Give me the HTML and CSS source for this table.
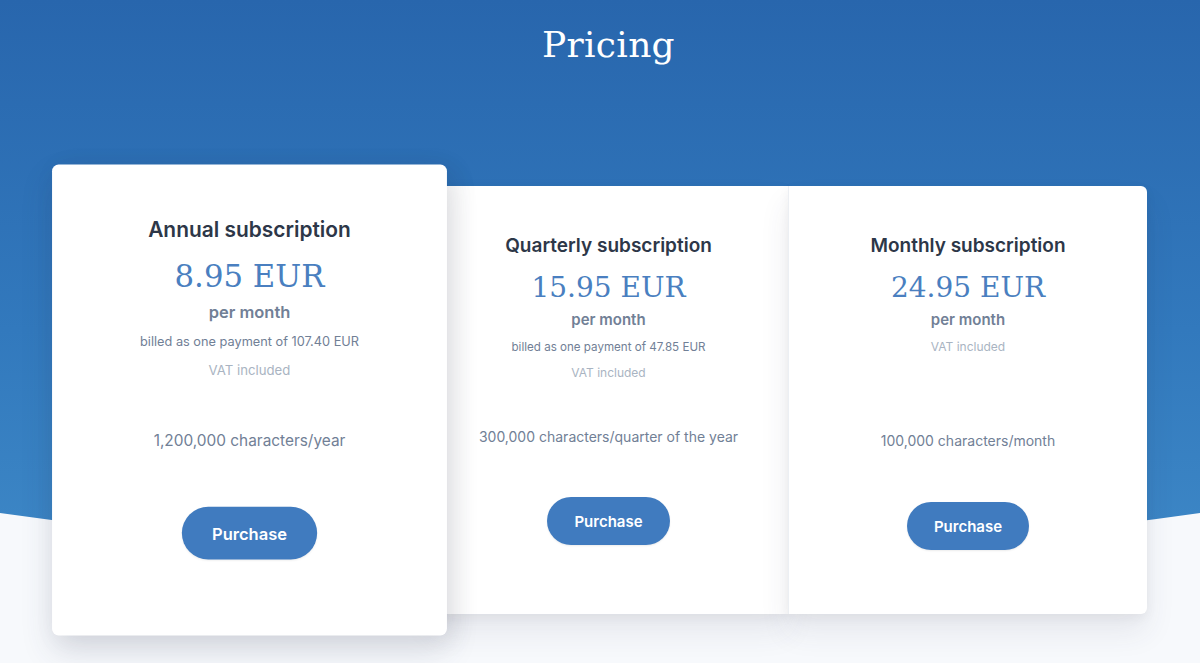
FILE: index.html
```html
<!DOCTYPE html>
<html lang="en">
<head>
<meta charset="utf-8">
<title>Pricing</title>
<link rel="stylesheet" href="styles.css">
</head>
<body>
<section class="pricing">
  <h1 class="title">Pricing</h1>
  <div class="plans">
    <div class="card card--featured">
      <h2 class="plan-name">Annual subscription</h2>
      <div class="price">8.95 EUR</div>
      <div class="per">per month</div>
      <div class="billed">billed as one payment of 107.40 EUR</div>
      <div class="vat">VAT included</div>
      <div class="features">1,200,000 characters/year</div>
      <button class="buy">Purchase</button>
    </div>
    <div class="card card--left">
      <h2 class="plan-name">Quarterly subscription</h2>
      <div class="price">15.95 EUR</div>
      <div class="per">per month</div>
      <div class="billed">billed as one payment of 47.85 EUR</div>
      <div class="vat">VAT included</div>
      <div class="features">300,000 characters/quarter of the year</div>
      <button class="buy">Purchase</button>
    </div>
    <div class="card card--right card--nobill">
      <h2 class="plan-name">Monthly subscription</h2>
      <div class="price">24.95 EUR</div>
      <div class="per">per month</div>
      <div class="vat vat--first">VAT included</div>
      <div class="features">100,000 characters/month</div>
      <button class="buy">Purchase</button>
    </div>
  </div>
</section>
</body>
</html>
```

FILE: styles.css
```css
html, body {
  margin: 0;
  padding: 0;
}
body {
  background: #f7f9fc;
  font-family: Inter, "Noto Sans", "Liberation Sans", sans-serif;
  width: 1200px;
  height: 663px;
  overflow: hidden;
}
.pricing {
  position: relative;
  padding-top: 23px;
}
.pricing::before {
  content: "";
  position: absolute;
  left: 0;
  top: 0;
  width: 1200px;
  height: 600px;
  background: linear-gradient(180deg, #2866ad 0%, #3279bd 55%, #3f8ac8 100%);
  clip-path: path('M0 0 H1200 V513 Q600 599 0 513 Z');
  z-index: 0;
}
.title {
  position: relative;
  margin: 0;
  padding-left: 17px;
  text-align: center;
  font-family: "DejaVu Serif", "Liberation Serif", serif;
  font-weight: 400;
  font-size: 36px;
  line-height: 43px;
  color: #ffffff;
  letter-spacing: 0.3px;
}
.plans {
  position: relative;
  display: flex;
  margin-top: 120px;
  padding-left: 70px;
}
.card {
  width: 359px;
  height: 428px;
  box-sizing: border-box;
  background: #ffffff;
  display: flex;
  flex-direction: column;
  align-items: center;
  text-align: center;
  padding-top: 48px;
  box-shadow: 0 18px 30px rgba(50, 60, 93, 0.09), 0 4px 12px rgba(0, 0, 0, 0.05);
}
.card--featured {
  position: relative;
  z-index: 2;
  transform: scale(1.1);
  border-radius: 6px;
  box-shadow: 0 14px 30px rgba(50, 60, 93, 0.14), 6px 4px 24px rgba(0, 0, 0, 0.07);
}
.card--left {
  border-radius: 6px 0 0 6px;
}
.card--right {
  border-radius: 0 6px 6px 0;
  border-left: 1px solid #eceff3;
}
.plan-name {
  margin: 0;
  font-size: 19px;
  line-height: 24px;
  font-weight: 600;
  color: #2d3748;
}
.price {
  margin-top: 12px;
  font-family: "DejaVu Serif", "Liberation Serif", serif;
  font-size: 28px;
  line-height: 36px;
  color: #4a7fc0;
}
.per {
  margin-top: 4px;
  font-size: 15px;
  line-height: 20px;
  font-weight: 600;
  color: #718096;
}
.billed {
  margin-top: 9px;
  font-size: 11.6px;
  line-height: 16px;
  color: #718096;
}
.vat {
  margin-top: 10px;
  font-size: 12px;
  line-height: 16px;
  color: #a9b4c2;
}
.vat--first {
  margin-top: 9px;
}
.features {
  margin-top: 46px;
  font-size: 14px;
  line-height: 20px;
  color: #718096;
}
.card--nobill .features {
  margin-top: 76px;
}
.buy {
  margin-top: 50px;
  height: 48px;
  padding: 0 27px;
  border: none;
  border-radius: 24px;
  background: #407bbf;
  color: #ffffff;
  font-family: Inter, "Noto Sans", "Liberation Sans", sans-serif;
  font-size: 15px;
  font-weight: 600;
  cursor: pointer;
  box-shadow: 0 1px 2px rgba(0, 0, 0, 0.08);
}
.card--nobill .buy {
  margin-top: 51px;
}
```
